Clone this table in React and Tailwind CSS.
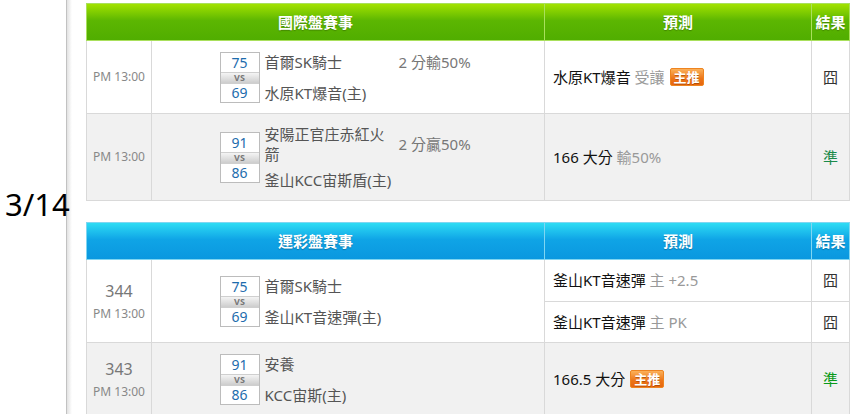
const GREEN = 'bg-[linear-gradient(#a2e200,#5cb602_45%,#50ad00)]';
const BLUE = 'bg-[linear-gradient(#2edcf4,#0fa4e6_45%,#0a97df)]';

function Badge() {
  return (
    <span className="ml-[5px] inline-block h-[18px] rounded-[2px] border border-[#ee8420] bg-[linear-gradient(#fbb15a,#ec7418_60%,#e6660e)] px-[3px] align-[1px] text-[13px] leading-[16px] font-bold text-white [text-shadow:0_1px_0_rgba(150,60,0,0.6)]">
      主推
    </span>
  );
}

function ScoreBox({ a, b }) {
  return (
    <div className="flex w-[40px] shrink-0 flex-col border border-[#bcbcbc] bg-white text-center text-[14px] text-[#1d6cad]">
      <div className="h-[19px] overflow-hidden leading-[19px]">{a}</div>
      <div className="h-[12px] overflow-hidden border-y border-[#cfcfcf] bg-[linear-gradient(#f4f4f4,#cdcdcd)] text-[9px] leading-[10px] font-bold text-[#777]">VS</div>
      <div className="h-[18px] overflow-hidden leading-[18px]">{b}</div>
    </div>
  );
}

function Match({ a, b, home, away, line }) {
  return (
    <div className="flex items-center justify-center">
      <ScoreBox a={a} b={b} />
      <div className="ml-[5px] flex min-h-[51px] w-[212px] flex-col justify-between gap-[6px] text-[15px] leading-[20px] text-[#555]">
        <div className="flex items-center">
          <div className="w-[134px] pr-[8px]">{home}</div>
          <div className="whitespace-nowrap text-[#777]">{line}</div>
        </div>
        <div>{away}</div>
      </div>
    </div>
  );
}

function Time({ no }) {
  return (
    <div className="flex flex-col items-center text-[#888]">
      {no && <div className="mb-[5px] text-[16px] leading-[20px] text-[#777]">{no}</div>}
      <div className="text-[12px] leading-[16px]">PM 13:00</div>
    </div>
  );
}

function Head({ title, bg, line }) {
  return (
    <thead>
      <tr className={`h-[37px] ${bg} text-[15px] font-bold text-white [text-shadow:0_1px_1px_rgba(0,0,0,0.25)]`}>
        <th colSpan={2} className={`border ${line}`}>{title}</th>
        <th className={`border ${line}`}>預測</th>
        <th className={`border ${line}`}>結果</th>
      </tr>
    </thead>
  );
}

const cell = 'border border-[#d9d9d9]';
const pred = `${cell} pl-[8px] text-[15px] text-[#111]`;
const res = `${cell} text-center text-[15px]`;

export default function App() {
  return (
    <div className="flex h-[414px] w-[860px] overflow-hidden bg-white font-['Noto_Sans','Noto_Sans_CJK_TC',sans-serif]">
      <div className="relative z-10 w-[66px] shrink-0">
        <div className="mt-[189px] ml-[5px] text-[31px] leading-none whitespace-nowrap text-black">3/14</div>
      </div>
      <div className="w-[6px] shrink-0 border-l border-[#c2c2c2] bg-[linear-gradient(to_right,#e2e2e2,#fff)]" />
      <div className="ml-[14px] flex flex-col gap-[21px] pt-[3px]">
        <table className="w-[763px] table-fixed border-collapse">
          <colgroup>
            <col className="w-[65px]" />
            <col className="w-[393px]" />
            <col className="w-[267px]" />
            <col className="w-[38px]" />
          </colgroup>
          <Head title="國際盤賽事" bg={GREEN} line="border-[#a9e05c]" />
          <tbody>
            <tr className="h-[73px] bg-white">
              <td className={cell}><Time /></td>
              <td className={cell}>
                <Match a="75" b="69" home="首爾SK騎士" away="水原KT爆音(主)" line="2 分輸50%" />
              </td>
              <td className={pred}>
                水原KT爆音 <span className="text-[#999]">受讓</span>
                <Badge />
              </td>
              <td className={`${res} text-[#333]`}>囧</td>
            </tr>
            <tr className="h-[87px] bg-[#f1f1f1]">
              <td className={cell}><Time /></td>
              <td className={cell}>
                <Match a="91" b="86" home="安陽正官庄赤紅火箭" away="釜山KCC宙斯盾(主)" line="2 分贏50%" />
              </td>
              <td className={pred}>
                166 大分 <span className="text-[#999]">輸50%</span>
              </td>
              <td className={`${res} text-[#1b8a4a]`}>準</td>
            </tr>
          </tbody>
        </table>

        <table className="w-[763px] table-fixed border-collapse">
          <colgroup>
            <col className="w-[65px]" />
            <col className="w-[393px]" />
            <col className="w-[267px]" />
            <col className="w-[38px]" />
          </colgroup>
          <Head title="運彩盤賽事" bg={BLUE} line="border-[#7fd6f2]" />
          <tbody>
            <tr className="h-[42px] bg-white">
              <td rowSpan={2} className={cell}><Time no="344" /></td>
              <td rowSpan={2} className={cell}>
                <Match a="75" b="69" home="首爾SK騎士" away="釜山KT音速彈(主)" />
              </td>
              <td className={pred}>
                釜山KT音速彈 <span className="text-[#999]">主 +2.5</span>
              </td>
              <td className={`${res} text-[#333]`}>囧</td>
            </tr>
            <tr className="h-[41px] bg-white">
              <td className={pred}>
                釜山KT音速彈 <span className="text-[#999]">主 PK</span>
              </td>
              <td className={`${res} text-[#333]`}>囧</td>
            </tr>
            <tr className="h-[73px] bg-[#f1f1f1]">
              <td className={cell}><Time no="343" /></td>
              <td className={cell}>
                <Match a="91" b="86" home="安養" away="KCC宙斯(主)" />
              </td>
              <td className={pred}>
                166.5 大分
                <Badge />
              </td>
              <td className={`${res} text-[#0a9a1a]`}>準</td>
            </tr>
          </tbody>
        </table>
      </div>
    </div>
  );
}
